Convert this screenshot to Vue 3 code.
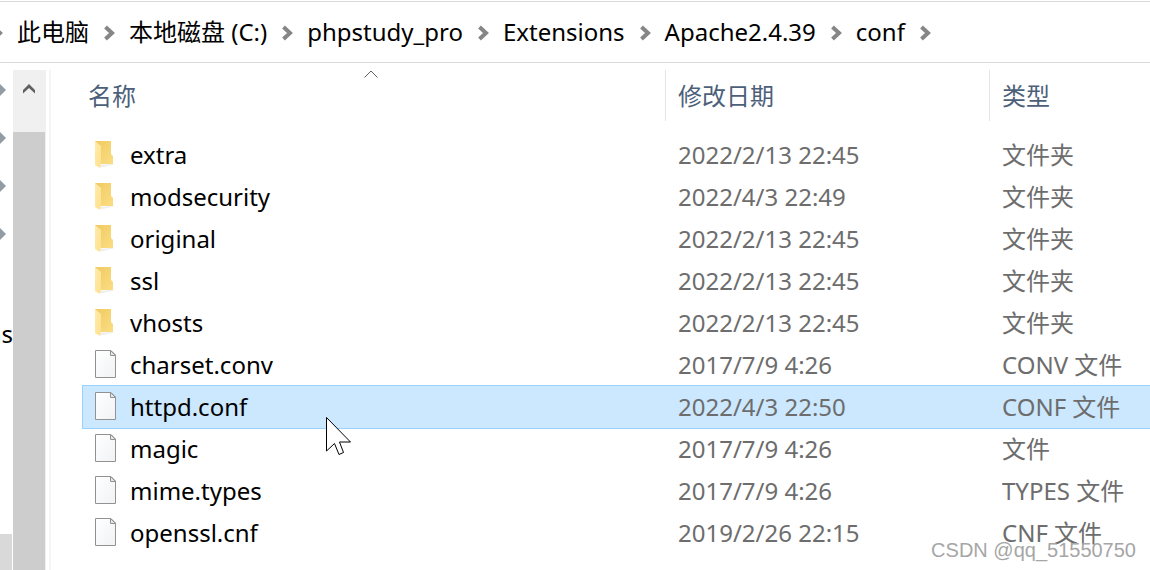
<script setup>
const crumbs = ['此电脑', '本地磁盘 (C:)', 'phpstudy_pro', 'Extensions', 'Apache2.4.39', 'conf']

const files = [
  { name: 'extra', date: '2022/2/13 22:45', type: '文件夹', folder: true },
  { name: 'modsecurity', date: '2022/4/3 22:49', type: '文件夹', folder: true },
  { name: 'original', date: '2022/2/13 22:45', type: '文件夹', folder: true },
  { name: 'ssl', date: '2022/2/13 22:45', type: '文件夹', folder: true },
  { name: 'vhosts', date: '2022/2/13 22:45', type: '文件夹', folder: true },
  { name: 'charset.conv', date: '2017/7/9 4:26', type: 'CONV 文件' },
  { name: 'httpd.conf', date: '2022/4/3 22:50', type: 'CONF 文件', selected: true },
  { name: 'magic', date: '2017/7/9 4:26', type: '文件' },
  { name: 'mime.types', date: '2017/7/9 4:26', type: 'TYPES 文件' },
  { name: 'openssl.cnf', date: '2019/2/26 22:15', type: 'CNF 文件' },
]
</script>

<template>
  <div class="explorer">
    <nav class="address">
      <svg class="chevron lead" viewBox="0 0 11 16"><path d="M1.5 2 L8 8 L1.5 14" /></svg>
      <template v-for="crumb in crumbs" :key="crumb">
        <a class="crumb" href="#">{{ crumb }}</a>
        <svg class="chevron" viewBox="0 0 11 16"><path d="M1.5 2 L8 8 L1.5 14" /></svg>
      </template>
    </nav>

    <div class="body">
      <aside class="tree">
        <span v-for="n in 4" :key="n" class="pin">
          <svg viewBox="0 0 7 12"><path d="M0 0 L6 6 L0 12 Z" /></svg>
        </span>
        <span class="node">ns</span>
        <span class="tree-bar"></span>
      </aside>

      <div class="scrollbar">
        <button class="up" type="button" aria-label="Up">
          <svg viewBox="0 0 12 10"><path d="M0 9.5 V6 L6 0 L12 6 V9.5 L6 4 Z" /></svg>
        </button>
        <div class="thumb"></div>
      </div>
      <div class="splitter"></div>

      <main class="list">
        <table>
          <colgroup>
            <col class="col-name" />
            <col class="col-date" />
            <col />
          </colgroup>
          <thead>
            <tr>
              <th>
                名称
                <svg class="sort" viewBox="0 0 14 8"><path d="M0.5 7.5 L7 1 L13.5 7.5" /></svg>
              </th>
              <th>修改日期</th>
              <th>类型</th>
            </tr>
          </thead>
          <tbody>
            <tr v-for="file in files" :key="file.name" :class="{ selected: file.selected }">
              <td class="name">
                <div class="entry">
                  <svg v-if="file.folder" class="icon" viewBox="0 0 22 28">
                    <defs>
                      <linearGradient id="back" x1="0" y1="0" x2="1" y2="1">
                        <stop offset="0" stop-color="#efca62" />
                        <stop offset="1" stop-color="#fbdd82" />
                      </linearGradient>
                      <linearGradient id="flap" x1="0" y1="0" x2="1" y2="1">
                        <stop offset="0" stop-color="#ffeba9" />
                        <stop offset="1" stop-color="#ffe08d" />
                      </linearGradient>
                    </defs>
                    <path d="M5 25 L20 23.5 L18 24.5 L6 27.5 Z" fill="#eeeeee" />
                    <path d="M0 1 H16 V14 L18 16 V24 H4 Z" fill="url(#back)" />
                    <path d="M0 1 L6 6 V24 L5 28 L0 25 Z" fill="url(#flap)" />
                  </svg>
                  <svg v-else class="icon" viewBox="0 0 22 28">
                    <defs>
                      <linearGradient id="page" x1="0" y1="0" x2="1" y2="1">
                        <stop offset="0" stop-color="#ffffff" />
                        <stop offset="1" stop-color="#f0f2f4" />
                      </linearGradient>
                    </defs>
                    <path d="M0.5 0.5 H16 L20.5 5 V27.5 H0.5 Z" fill="url(#page)" stroke="#929292" />
                    <path d="M15.5 0.5 V5.5 H20.5 Z" fill="#e6e6e6" stroke="#929292" />
                  </svg>
                  <span>{{ file.name }}</span>
                </div>
              </td>
              <td>{{ file.date }}</td>
              <td>{{ file.type }}</td>
            </tr>
          </tbody>
        </table>
      </main>
    </div>

    <svg class="cursor" viewBox="0 0 26 39">
      <path d="M0.5 0.5 V34 L8.5 26.5 L13 37.5 L17.5 35.5 L13.5 25 H24.5 Z" />
    </svg>
    <span class="watermark">CSDN @qq_51550750</span>
  </div>
</template>

<style>
body {
  margin: 0;
  background: #fff;
}
</style>

<style scoped>
.explorer {
  position: relative;
  display: flex;
  flex-direction: column;
  height: 100vh;
  overflow: hidden;
  background: #fff;
  font: 24px/32px "Noto Sans", "Noto Sans CJK SC", sans-serif;
  color: #000;
}
.address {
  display: flex;
  align-items: center;
  flex: none;
  height: 60px;
  margin-top: 1px;
  border-top: 1px solid #d9d9d9;
  border-bottom: 1px solid #d9d9d9;
  white-space: nowrap;
}
.crumb {
  color: #000;
  text-decoration: none;
}
.chevron {
  flex: none;
  width: 11px;
  height: 16px;
  margin: 2px 14px 0 15px;
  fill: none;
  stroke: #868686;
  stroke-width: 4;
}
.lead {
  margin-left: -8px;
}
.body {
  display: flex;
  flex: 1;
  min-height: 0;
  padding-top: 7px;
}
.tree {
  display: flex;
  flex-direction: column;
  flex: none;
  width: 13px;
  overflow: hidden;
}
.pin {
  display: flex;
  align-items: center;
  height: 48px;
  margin-top: -4px;
  margin-bottom: 4px;
}
.pin svg {
  width: 7px;
  height: 12px;
  fill: #929ca4;
}
.node {
  display: flex;
  justify-content: flex-end;
  height: 32px;
  margin-top: 56px;
}
.tree-bar {
  flex: 1;
  margin-top: 184px;
  margin-right: 1px;
  background: #d9d9d9;
}
.scrollbar {
  display: flex;
  flex-direction: column;
  flex: none;
  width: 33px;
  background: #f0f0f0;
}
.up {
  display: flex;
  align-items: center;
  justify-content: center;
  height: 62px;
  padding: 0 1px 24px 0;
  border: 0;
  background: none;
}
.up svg {
  width: 12px;
  height: 10px;
  fill: #606060;
}
.thumb {
  flex: 1;
  margin-right: 1px;
  background: #cdcdcd;
}
.splitter {
  flex: none;
  width: 2px;
  margin-left: 3px;
  background: #f5f5f5;
}
.list {
  flex: 1;
  min-width: 0;
  padding-left: 32px;
}
table {
  width: 100%;
  table-layout: fixed;
  border-spacing: 0;
}
.col-name {
  width: 582px;
}
.col-date {
  width: 324px;
}
th {
  position: relative;
  height: 51px;
  padding: 0 0 0 12px;
  border-left: 1px solid #e5e5e5;
  font-weight: 400;
  text-align: left;
  color: #4c607a;
}
th:first-child {
  padding-left: 5px;
  border-left: 0;
}
.sort {
  position: absolute;
  top: 0;
  left: 50%;
  width: 14px;
  height: 8px;
  margin-left: -10px;
  fill: none;
  stroke: #606060;
}
tbody::before {
  content: "";
  display: block;
  height: 13px;
}
td {
  height: 42px;
  padding: 0 0 0 13px;
  color: #6d6d6d;
  white-space: nowrap;
}
.name {
  padding-left: 12px;
  color: #000;
}
.entry {
  display: flex;
  align-items: center;
  gap: 13px;
}
.icon {
  flex: none;
  width: 22px;
  height: 28px;
  margin-bottom: 2px;
}
.selected {
  background: #cce8ff;
  outline: 1px solid #99d1ff;
}
.cursor {
  position: absolute;
  top: 417px;
  left: 326px;
  width: 26px;
  height: 39px;
  fill: #fff;
  stroke: #000;
}
.watermark {
  position: absolute;
  right: 14px;
  bottom: 8px;
  font: 20px/24px "Liberation Sans", Arial, sans-serif;
  color: #a6a6a6;
}
</style>
